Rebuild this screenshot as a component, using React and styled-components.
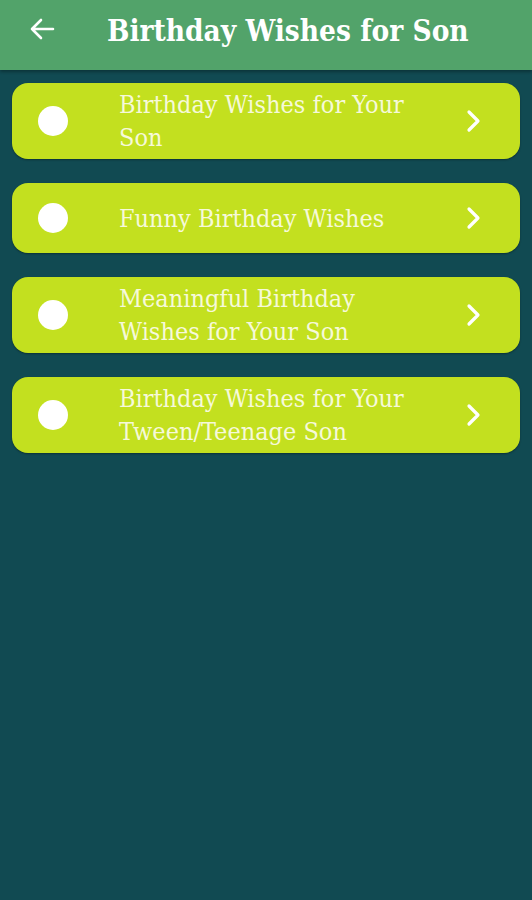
import styled, { createGlobalStyle } from "styled-components"

const GlobalStyle = createGlobalStyle`
    html, body {
        margin : 0;
        padding : 0;
        background : #114a52;
    }
    body {
        font-family : "DejaVu Serif", "Liberation Serif", serif;
    }
`

const items = [
    "Birthday Wishes for Your Son",
    "Funny Birthday Wishes",
    "Meaningful Birthday Wishes for Your Son",
    "Birthday Wishes for Your Tween/Teenage Son",
]

const Page = styled.div`
    width : 532px;
    min-height : 900px;
    background : #114a52;
    display : flex;
    flex-direction : column;
`
const Header = styled.header`
    height : 70px;
    background : #52a36a;
    display : flex;
    align-items : center;
    padding-left : 28px;
    box-shadow : 0 2px 3px rgba(0,0,0,.3);
`
const BackButton = styled.div`
    width : 28px;
    height : 28px;
    display : flex;
    align-items : center;
    justify-content : center;
    margin-top : -12px;
`
const Title = styled.h1`
    margin : -10px 0 0 51px;
    font-family : "DejaVu Serif Condensed", "DejaVu Serif", serif;
    font-stretch : condensed;
    font-weight : bold;
    font-size : 29.5px;
    color : #ffffff;
    white-space : nowrap;
`
const List = styled.div`
    display : flex;
    flex-direction : column;
    gap : 24px;
    padding : 13px 12px 0 12px;
`
const Card = styled.div`
    min-height : 70px;
    box-sizing : border-box;
    padding : 5px 38px 5px 26px;
    background : #c3e01f;
    border-radius : 16px;
    display : flex;
    align-items : center;
    box-shadow : 0 1px 2px rgba(0,0,0,.35);
`
const Dot = styled.div`
    width : 30px;
    height : 30px;
    border-radius : 50%;
    background : #ffffff;
    flex-shrink : 0;
`
const Label = styled.div`
    flex : 1;
    margin-left : 51px;
    padding-right : 47px;
    font-family : "DejaVu Serif Condensed", "DejaVu Serif", serif;
    font-stretch : condensed;
    font-size : 25px;
    line-height : 33px;
    color : #f6f9d9;
`

function Chevron(){
    return(
        <svg width="16" height="24" viewBox="0 0 16 24">
            <path d="M3 3 L12 12 L3 21" fill="none" stroke="#ffffff" strokeWidth="3.2" strokeLinecap="round" strokeLinejoin="round"/>
        </svg>
    )
}

function BackArrow(){
    return(
        <svg width="26" height="24" viewBox="0 0 26 24">
            <path d="M24 12 H3 M12 3 L3 12 L12 21" fill="none" stroke="#ffffff" strokeWidth="2.6" strokeLinecap="round" strokeLinejoin="round"/>
        </svg>
    )
}

export default function App(){
    return (
        <Page>
            <GlobalStyle/>
            <Header>
                <BackButton><BackArrow/></BackButton>
                <Title>Birthday Wishes for Son</Title>
            </Header>
            <List>
                {items.map(text =>
                    <Card key={text}>
                        <Dot/>
                        <Label>{text}</Label>
                        <Chevron/>
                    </Card>
                )}
            </List>
        </Page>
    )
}
